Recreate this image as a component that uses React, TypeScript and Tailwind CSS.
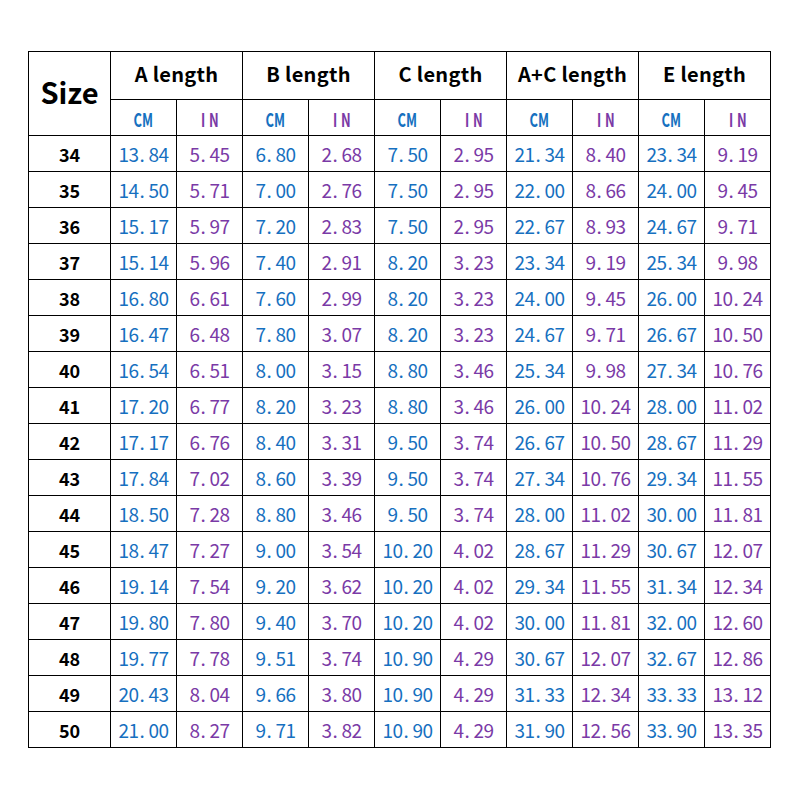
import * as React from "react";

// [size, A cm, A in, B cm, B in, C cm, C in, A+C cm, A+C in, E cm, E in]
const rows: string[][] = [
  ["34", "13.84", "5.45", "6.80", "2.68", "7.50", "2.95", "21.34", "8.40", "23.34", "9.19"],
  ["35", "14.50", "5.71", "7.00", "2.76", "7.50", "2.95", "22.00", "8.66", "24.00", "9.45"],
  ["36", "15.17", "5.97", "7.20", "2.83", "7.50", "2.95", "22.67", "8.93", "24.67", "9.71"],
  ["37", "15.14", "5.96", "7.40", "2.91", "8.20", "3.23", "23.34", "9.19", "25.34", "9.98"],
  ["38", "16.80", "6.61", "7.60", "2.99", "8.20", "3.23", "24.00", "9.45", "26.00", "10.24"],
  ["39", "16.47", "6.48", "7.80", "3.07", "8.20", "3.23", "24.67", "9.71", "26.67", "10.50"],
  ["40", "16.54", "6.51", "8.00", "3.15", "8.80", "3.46", "25.34", "9.98", "27.34", "10.76"],
  ["41", "17.20", "6.77", "8.20", "3.23", "8.80", "3.46", "26.00", "10.24", "28.00", "11.02"],
  ["42", "17.17", "6.76", "8.40", "3.31", "9.50", "3.74", "26.67", "10.50", "28.67", "11.29"],
  ["43", "17.84", "7.02", "8.60", "3.39", "9.50", "3.74", "27.34", "10.76", "29.34", "11.55"],
  ["44", "18.50", "7.28", "8.80", "3.46", "9.50", "3.74", "28.00", "11.02", "30.00", "11.81"],
  ["45", "18.47", "7.27", "9.00", "3.54", "10.20", "4.02", "28.67", "11.29", "30.67", "12.07"],
  ["46", "19.14", "7.54", "9.20", "3.62", "10.20", "4.02", "29.34", "11.55", "31.34", "12.34"],
  ["47", "19.80", "7.80", "9.40", "3.70", "10.20", "4.02", "30.00", "11.81", "32.00", "12.60"],
  ["48", "19.77", "7.78", "9.51", "3.74", "10.90", "4.29", "30.67", "12.07", "32.67", "12.86"],
  ["49", "20.43", "8.04", "9.66", "3.80", "10.90", "4.29", "31.33", "12.34", "33.33", "13.12"],
  ["50", "21.00", "8.27", "9.71", "3.82", "10.90", "4.29", "31.90", "12.56", "33.90", "13.35"],
];

const groups = ["A length", "B length", "C length", "A+C length", "E length"];

const cell = "border border-black p-0 text-center align-middle";
const cjk = "font-['Noto_Sans_CJK_SC',sans-serif]";

// every character gets a fixed 10px slot, the dot sits at the left of its slot
function Num({ value }: { value: string }) {
  return (
    <span className="inline-flex">
      {value.split("").map((ch, i) => (
        <span
          key={i}
          className={`inline-block w-[10px] ${ch === "." ? "text-left pl-[1px]" : "text-center"}`}
        >
          {ch}
        </span>
      ))}
    </span>
  );
}

export default function App() {
  return (
    <div className="min-h-[800px] w-[800px] bg-white pl-[28px] pt-[51px]">
      <table className="w-[743px] table-fixed border-collapse">
        <colgroup>
          <col className="w-[82px]" />
          {Array.from({ length: 10 }).map((_, i) => (
            <col key={i} className="w-[66px]" />
          ))}
        </colgroup>
        <thead>
          <tr className="h-[48px]">
            <th
              rowSpan={2}
              className={`${cell} ${cjk} pb-[4px] text-[29px] font-bold leading-none text-black`}
            >
              Size
            </th>
            {groups.map((g) => (
              <th
                key={g}
                colSpan={2}
                className={`${cell} ${cjk} pb-[4px] text-[20px] font-bold leading-none tracking-[0.3px] text-black`}
              >
                {g}
              </th>
            ))}
          </tr>
          <tr className="h-[36px]">
            {groups.map((g) => (
              <React.Fragment key={g}>
                <th className={`${cell} ${cjk} pt-[2px] text-[19px] font-bold leading-none text-[#1670c0]`}>
                  <span className="inline-block scale-x-[0.68]">CM</span>
                </th>
                <th className={`${cell} ${cjk} pt-[2px] text-[19px] font-bold leading-none text-[#7a3aa6]`}>
                  <span className="inline-block scale-x-[0.68] pl-[0.3em] tracking-[0.3em]">IN</span>
                </th>
              </React.Fragment>
            ))}
          </tr>
        </thead>
        <tbody>
          {rows.map((r) => (
            <tr key={r[0]} className="h-[36px]">
              <td className={`${cell} ${cjk} pt-[1px] text-[18px] font-bold leading-none text-black`}>
                {r[0]}
              </td>
              {r.slice(1).map((v, i) => (
                <td
                  key={i}
                  className={`${cell} ${cjk} text-[19px] font-normal leading-none ${
                    i % 2 === 0 ? "text-[#1670c0]" : "text-[#7a3aa6]"
                  }`}
                >
                  <Num value={v} />
                </td>
              ))}
            </tr>
          ))}
        </tbody>
      </table>
    </div>
  );
}
